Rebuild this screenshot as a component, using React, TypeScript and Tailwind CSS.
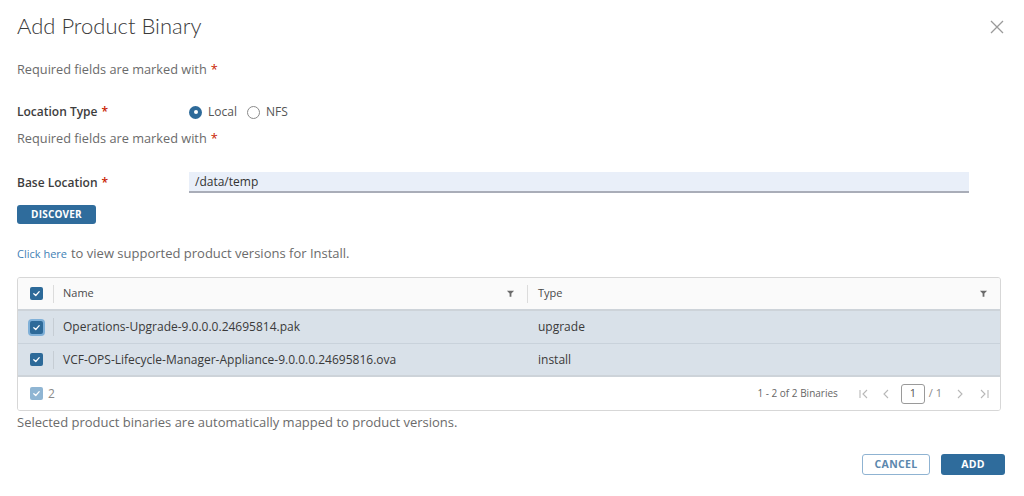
import React from "react";

const rows = [
    { name: "Operations-Upgrade-9.0.0.0.24695814.pak", type: "upgrade", focus: true },
    { name: "VCF-OPS-Lifecycle-Manager-Appliance-9.0.0.0.24695816.ova", type: "install", focus: false },
];

const Check: React.FC<{ light?: boolean; focus?: boolean }> = ({ light, focus }) => (
    <span
        className={`flex items-center justify-center w-[13px] h-[13px] rounded-[2px] ${
            light ? "bg-[#8fb5d3]" : "bg-[#2d6a99]"
        } ${focus ? "ring-2 ring-[#7fb0d8]" : ""}`}
    >
        <svg width="9" height="9" viewBox="0 0 10 10" fill="none">
            <path d="M2 5.2 L4.2 7.2 L8 3" stroke="white" strokeWidth="1.4" strokeLinecap="round" strokeLinejoin="round" />
        </svg>
    </span>
);

const Filter = () => (
    <svg width="9" height="9" viewBox="0 0 10 10">
        <path d="M1 2 H9 L6 5 V8.5 L4 8.5 V5 Z" fill="#6b6b6b" />
    </svg>
);

// стрілки пагінації
const PageArrow: React.FC<{ dir: "first" | "prev" | "next" | "last" }> = ({ dir }) => {
    const paths: Record<string, string> = {
        first: "M2 2 V10 M9 2 L5 6 L9 10",
        prev: "M8 2 L4 6 L8 10",
        next: "M4 2 L8 6 L4 10",
        last: "M10 2 V10 M3 2 L7 6 L3 10",
    };
    return (
        <svg width="12" height="12" viewBox="0 0 12 12" fill="none">
            <path d={paths[dir]} stroke="#b8b8b8" strokeWidth="1.1" />
        </svg>
    );
};

const Req = () => <span className="text-[#c92100] ml-1">*</span>;

export default function App() {
    return (
        <div className="w-[1024px] h-[496px] bg-white text-[#4a4a4a] relative font-['Open_Sans','Lato',sans-serif] overflow-hidden">
            {/* Заголовок */}
            <div className="flex justify-between items-start pl-[17px] pr-[20px] pt-[12px]">
                <h1 className="text-[22px] font-light text-[#3a3a3a] leading-[28px] font-['Lato',sans-serif]">
                    Add Product Binary
                </h1>
                <svg width="14" height="14" viewBox="0 0 14 14" className="mt-[8px]">
                    <path d="M1 1 L13 13 M13 1 L1 13" stroke="#9a9a9a" strokeWidth="1.3" />
                </svg>
            </div>

            <div className="pl-[17px] pr-[23px]">
                <p className="text-[12.75px] text-[#6b6b6b] mt-[21px] leading-[16px]">
                    Required fields are marked with
                    <Req />
                </p>

                <div className="flex items-center mt-[27px] h-[16px]">
                    <span className="w-[172px] text-[12px] font-semibold text-[#3d3d3d]">
                        Location Type
                        <Req />
                    </span>
                    <span className="flex items-center gap-[6px] text-[12px] text-[#555]">
                        <span className="w-[13px] h-[13px] rounded-full bg-[#2d6a99] flex items-center justify-center">
                            <span className="w-[4px] h-[4px] rounded-full bg-white" />
                        </span>
                        Local
                    </span>
                    <span className="flex items-center gap-[6px] text-[12px] text-[#555] ml-[10px]">
                        <span className="w-[13px] h-[13px] rounded-full border border-[#8a8a8a] bg-white" />
                        NFS
                    </span>
                </div>

                <p className="text-[12.75px] text-[#6b6b6b] mt-[10px] leading-[16px]">
                    Required fields are marked with
                    <Req />
                </p>

                <div className="flex items-center mt-[26px]">
                    <span className="w-[172px] text-[12px] font-semibold text-[#3d3d3d]">
                        Base Location
                        <Req />
                    </span>
                    <div className="w-[780px] h-[21px] bg-[#e9eff9] border-b-2 border-[#a9adb8] flex items-center pl-[6px] text-[12px] text-[#333]">
                        /data/temp
                    </div>
                </div>

                <button className="mt-[12px] w-[79px] h-[19px] rounded-[3px] bg-[#2f6c9c] text-white text-[10px] font-bold tracking-[0.2px] flex items-center justify-center">
                    DISCOVER
                </button>

                <p className="mt-[21px] text-[13px] text-[#6b6b6b] leading-[16px]">
                    <span className="text-[#3f7fb5] text-[11px] mr-[4px]">Click here</span>
                    to view supported product versions for Install.
                </p>

                {/* Таблиця */}
                <div className="mt-[15px] w-[984px] border border-[#d7d7d7] rounded-[3px] overflow-hidden">
                    <div className="flex items-center h-[33px] bg-[#fafafa] border-b-2 border-[#cdd3d9] text-[11px] text-[#4a4a4a]">
                        <div className="w-[35px] flex justify-center pl-[1px]">
                            <Check />
                        </div>
                        <div className="w-px h-[18px] bg-[#dcdcdc]" />
                        <div className="w-[473px] flex items-center justify-between pl-[9px] pr-[12px]">
                            <span>Name</span>
                            <Filter />
                        </div>
                        <div className="w-px h-[18px] bg-[#dcdcdc]" />
                        <div className="flex-1 flex items-center justify-between pl-[10px] pr-[12px]">
                            <span>Type</span>
                            <Filter />
                        </div>
                    </div>
                    {rows.map((r, i) => (
                        <div
                            key={i}
                            className={`flex items-center h-[33px] bg-[#d9e1e9] text-[12px] text-[#3a3a3a] ${
                                i === 0 ? "border-b border-[#c9d2db]" : "border-b-2 border-[#cdd3d9]"
                            }`}
                        >
                            <div className="w-[35px] flex justify-center pl-[1px]">
                                <Check focus={r.focus} />
                            </div>
                            <div className="w-px h-[18px] bg-[#c6cdd4]" />
                            <div className="w-[474px] pl-[9px]">{r.name}</div>
                            <div className="flex-1 pl-[10px]">{r.type}</div>
                        </div>
                    ))}
                    <div className="flex items-center h-[33px] bg-white text-[11px] text-[#777]">
                        <div className="flex items-center gap-[5px] pl-[12px]">
                            <Check light />
                            <span className="text-[12px] text-[#8a8a8a]">2</span>
                        </div>
                        <div className="ml-auto flex items-center pr-[10px]">
                            <span className="text-[10px] text-[#666] mr-[20px]">1 - 2 of 2 Binaries</span>
                            <span className="mr-[10px]">
                                <PageArrow dir="first" />
                            </span>
                            <span className="mr-[9px]">
                                <PageArrow dir="prev" />
                            </span>
                            <span className="w-[24px] h-[20px] border border-[#9a9a9a] rounded-[3px] flex items-center justify-center text-[11px] text-[#555]">
                                1
                            </span>
                            <span className="text-[11px] text-[#888] ml-[4px] mr-[12px]">/ 1</span>
                            <span className="mr-[12px]">
                                <PageArrow dir="next" />
                            </span>
                            <PageArrow dir="last" />
                        </div>
                    </div>
                </div>

                <p className="mt-[3px] text-[13px] text-[#6b6b6b] leading-[16px]">
                    Selected product binaries are automatically mapped to product versions.
                </p>

                <div className="flex justify-end gap-[11px] mt-[24px] mr-[-4px]">
                    <button className="w-[68px] h-[21px] rounded-[3px] border border-[#8fb3d2] text-[#5b87ad] text-[10.5px] font-bold tracking-[0.3px] flex items-center justify-center">
                        CANCEL
                    </button>
                    <button className="w-[64px] h-[21px] rounded-[3px] bg-[#2f6c9c] text-white text-[10.5px] font-bold tracking-[0.3px] flex items-center justify-center">
                        ADD
                    </button>
                </div>
            </div>
        </div>
    );
}
